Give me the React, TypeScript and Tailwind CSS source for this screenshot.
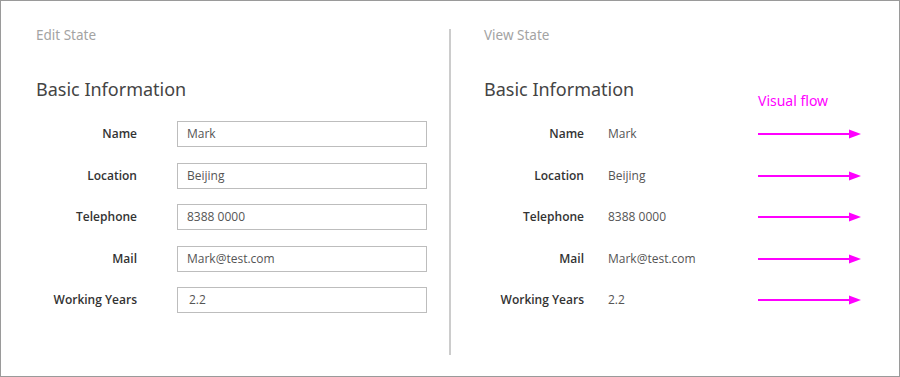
const rows = [
  { label: 'Name', value: 'Mark' },
  { label: 'Location', value: 'Beijing' },
  { label: 'Telephone', value: '8388 0000' },
  { label: 'Mail', value: 'Mark@test.com' },
  { label: 'Working Years', value: '2.2', nudge: true },
];

function Arrow() {
  return (
    <svg width="103" height="10" viewBox="0 0 103 10" className="block">
      <rect x="0" y="4" width="92" height="2" fill="#ff00ff" />
      <polygon points="91,0.5 103,5 91,9.5" fill="#ff00ff" />
    </svg>
  );
}

export default function App() {
  return (
    <div className="flex h-[377px] w-[900px] border border-[#9a9a9a] bg-white font-['Open_Sans',sans-serif]">
      {/* edit state */}
      <div className="flex w-[448px] flex-col pl-[35px] pt-[25px]">
        <div className="h-[18px] font-['Noto_Sans',sans-serif] text-[13.5px] leading-[18px] text-[#a3a3a3]">Edit State</div>
        <div className="mt-[33px] h-[24px] font-['Noto_Sans',sans-serif] text-[18px] leading-[24px] text-[#444]">
          Basic Information
        </div>
        <div className="mt-[20px] flex flex-col gap-[15.5px]">
          {rows.map((r) => (
            <div key={r.label} className="flex h-[26px] items-center">
              <div className="w-[101px] text-right text-[12px] font-semibold text-[#333]">{r.label}</div>
              <div
                className={`ml-[40px] flex h-[26px] w-[250px] items-center border border-[#bdbdbd] text-[12px] text-[#555] ${
                  r.nudge ? 'pl-[11px]' : 'pl-[9px]'
                }`}
              >
                {r.value}
              </div>
            </div>
          ))}
        </div>
      </div>

      <div className="mt-[28px] h-[326px] w-[2px] bg-[#cccccc]" />

      {/* view state */}
      <div className="flex flex-1 flex-col pl-[33px] pt-[25px]">
        <div className="h-[18px] font-['Noto_Sans',sans-serif] text-[13.5px] leading-[18px] text-[#a3a3a3]">View State</div>
        <div className="mt-[33px] flex h-[24px] items-start">
          <div className="w-[274px] font-['Noto_Sans',sans-serif] text-[18px] leading-[24px] text-[#444]">
            Basic Information
          </div>
          <div className="mt-[15px] font-['Noto_Sans',sans-serif] text-[14px] leading-[18px] text-[#ff00ff]">Visual flow</div>
        </div>
        <div className="mt-[20px] flex flex-col gap-[15.5px]">
          {rows.map((r) => (
            <div key={r.label} className="flex h-[26px] items-center">
              <div className="w-[100px] text-right text-[12px] font-semibold text-[#333]">{r.label}</div>
              <div className="ml-[24px] w-[150px] text-[12px] text-[#555]">{r.value}</div>
              <Arrow />
            </div>
          ))}
        </div>
      </div>
    </div>
  );
}
